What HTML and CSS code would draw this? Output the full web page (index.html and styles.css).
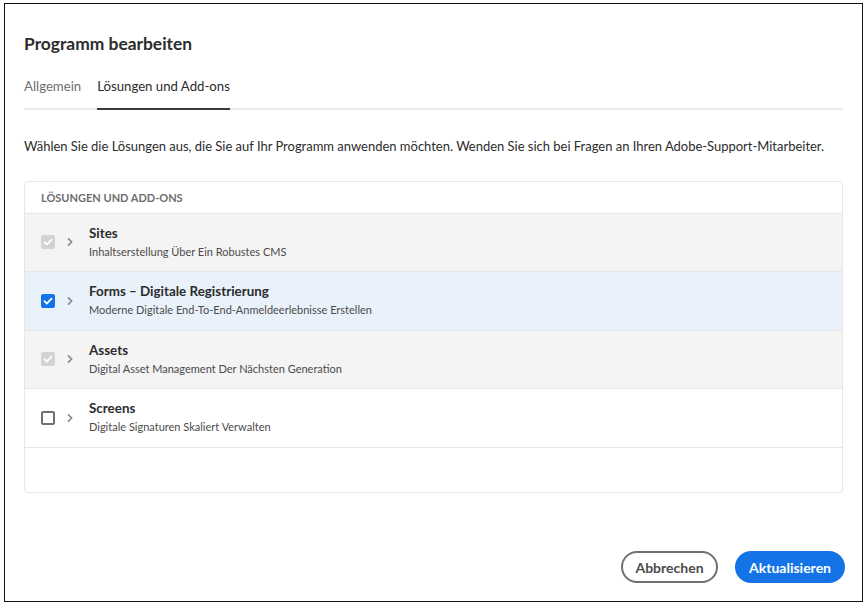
FILE: index.html
```html
<!DOCTYPE html>
<html lang="de">
<head>
<meta charset="utf-8">
<link rel="stylesheet" href="styles.css">
</head>
<body>
<div class="dialog">
  <h1 class="title">Programm bearbeiten</h1>
  <div class="tabs">
    <div class="tab">Allgemein</div>
    <div class="tab active">Lösungen und Add-ons</div>
  </div>
  <p class="desc">Wählen Sie die Lösungen aus, die Sie auf Ihr Programm anwenden möchten. Wenden Sie sich bei Fragen an Ihren Adobe-Support-Mitarbeiter.</p>
  <div class="table">
    <div class="thead">LÖSUNGEN UND ADD-ONS</div>
    <div class="row disabled">
      <span class="cb checked dis"><svg viewBox="0 0 14 14"><path d="M3.5 7.2l2.3 2.4 4.7-5" /></svg></span>
      <span class="chev"><svg viewBox="0 0 10 10"><path d="M3.5 1.8l3.2 3.2-3.2 3.2" /></svg></span>
      <div class="text"><div class="name">Sites</div><div class="sub">Inhaltserstellung Über Ein Robustes CMS</div></div>
    </div>
    <div class="row selected">
      <span class="cb checked"><svg viewBox="0 0 14 14"><path d="M3.5 7.2l2.3 2.4 4.7-5" /></svg></span>
      <span class="chev"><svg viewBox="0 0 10 10"><path d="M3.5 1.8l3.2 3.2-3.2 3.2" /></svg></span>
      <div class="text"><div class="name">Forms – Digitale Registrierung</div><div class="sub">Moderne Digitale End-To-End-Anmeldeerlebnisse Erstellen</div></div>
    </div>
    <div class="row disabled">
      <span class="cb checked dis"><svg viewBox="0 0 14 14"><path d="M3.5 7.2l2.3 2.4 4.7-5" /></svg></span>
      <span class="chev"><svg viewBox="0 0 10 10"><path d="M3.5 1.8l3.2 3.2-3.2 3.2" /></svg></span>
      <div class="text"><div class="name">Assets</div><div class="sub">Digital Asset Management Der Nächsten Generation</div></div>
    </div>
    <div class="row">
      <span class="cb"></span>
      <span class="chev"><svg viewBox="0 0 10 10"><path d="M3.5 1.8l3.2 3.2-3.2 3.2" /></svg></span>
      <div class="text"><div class="name">Screens</div><div class="sub">Digitale Signaturen Skaliert Verwalten</div></div>
    </div>
  </div>
  <div class="footer">
    <button class="btn secondary">Abbrechen</button>
    <button class="btn primary">Aktualisieren</button>
  </div>
</div>
</body>
</html>
```
FILE: styles.css
```css
* { box-sizing: border-box; }
html, body { margin: 0; padding: 0; background: #fff; }
body {
  font-family: "Lato", "Noto Sans", sans-serif;
  color: #2c2c2c;
  padding: 3px 0 0 4px;
}
.dialog {
  width: 859px;
  height: 599px;
  border: 1.5px solid #111;
  padding: 0 19px 0 19px;
  display: flex;
  flex-direction: column;
}
.title {
  margin: 28px 0 0 0;
  font-size: 17.4px;
  font-weight: 700;
  line-height: 24px;
  color: #2c2c2c;
}
.tabs {
  margin-top: 17.5px;
  display: flex;
  gap: 16px;
  border-bottom: 2px solid #eaeaea;
}
.tab {
  font-size: 13.2px;
  line-height: 20px;
  padding: 2px 0 12px;
  color: #6e6e6e;
  margin-bottom: -2px;
  border-bottom: 2px solid transparent;
}
.tab.active {
  color: #2c2c2c;
  border-bottom-color: #3a3a3a;
}
.desc {
  margin: 26px 0 0 0;
  font-size: 13px;
  letter-spacing: -0.015px;
  line-height: 20px;
  color: #2c2c2c;
  white-space: nowrap;
}
.table {
  margin-top: 25px;
  height: 312px;
  border: 1px solid #e6e6e6;
  border-radius: 4px;
  overflow: hidden;
}
.thead {
  height: 32px;
  padding: 9px 0 0 16px;
  font-size: 11px;
  font-weight: 700;
  letter-spacing: 0;
  color: #6e6e6e;
  border-bottom: 1px solid #e6e6e6;
}
.row {
  height: 58.5px;
  display: flex;
  align-items: center;
  padding-left: 16px;
  border-bottom: 1px solid #e6e6e6;
}
.row.disabled { background: #f4f4f4; }
.row.selected { background: #e9f1fb; }
.cb {
  width: 14px;
  height: 14px;
  border: 2px solid #707070;
  border-radius: 2px;
  display: flex;
  align-items: center;
  justify-content: center;
  flex: none;
}
.cb.checked { background: #1473e6; border-color: #1473e6; }
.cb.dis { background: #d3d3d3; border-color: #d3d3d3; }
.cb svg { width: 14px; height: 14px; flex: none; }
.cb path { fill: none; stroke: #fff; stroke-width: 1.8; stroke-linecap: round; stroke-linejoin: round; }
.chev { width: 10px; height: 10px; margin-left: 10px; display: flex; }
.chev svg { width: 10px; height: 10px; }
.chev path { fill: none; stroke: #8a8a8a; stroke-width: 1.7; stroke-linecap: round; stroke-linejoin: round; }
.text { margin-left: 14px; }
.name { font-size: 13.4px; font-weight: 700; line-height: 18px; color: #2c2c2c; }
.sub { font-size: 11px; line-height: 18px; color: #4b4b4b; margin-top: 1px; }
.footer {
  margin-top: auto;
  margin-bottom: 18px;
  margin-right: -2px;
  display: flex;
  justify-content: flex-end;
  gap: 17px;
}
.btn {
  height: 32px;
  border-radius: 16px;
  font-family: inherit;
  font-size: 14px;
  font-weight: 700;
  padding: 0 12px;
  cursor: pointer;
}
.btn.secondary { background: #fff; border: 2px solid #707070; color: #4b4b4b; width: 97px; }
.btn.primary { background: #1473e6; border: 2px solid #1473e6; color: #fff; width: 110px; }
```
